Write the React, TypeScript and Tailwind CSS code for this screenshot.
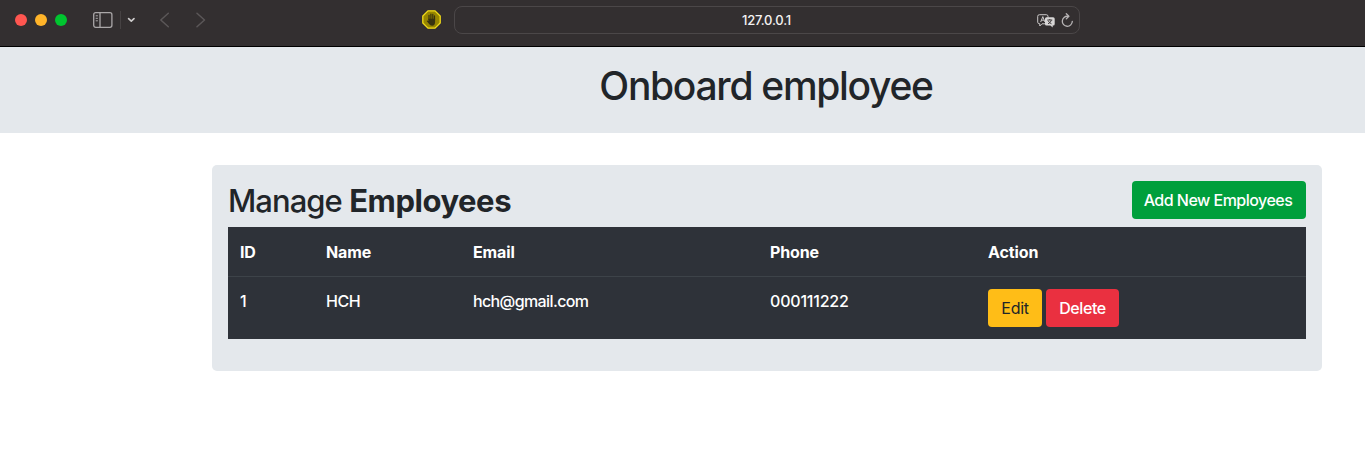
import type { ReactNode } from "react";

type Employee = { id: number; name: string; email: string; phone: string };

const employees: Employee[] = [
  { id: 1, name: "HCH", email: "hch@gmail.com", phone: "000111222" },
];

function Toolbar() {
  return (
    <header className="flex h-[47px] items-start border-b border-black bg-[#332f30]">
      <div className="flex h-10 w-[422px] shrink-0 items-center pl-[15px]">
        <div className="flex gap-2">
          <span className="size-3 rounded-full bg-[#ff5650]" />
          <span className="size-3 rounded-full bg-[#ffb429]" />
          <span className="size-3 rounded-full bg-[#00c52f]" />
        </div>
        <svg className="ml-[26px] h-4 w-5" viewBox="0 0 20 16" fill="none" stroke="#aaa7a8" strokeWidth="1.3">
          <rect x="0.7" y="0.7" width="18.2" height="14.6" rx="2" />
          <path d="M7 1v14" />
          <path d="M2.7 3.8h2.2M2.7 6.3h2.2M2.7 8.8h2.2" strokeWidth="1" />
        </svg>
        <span className="ml-[7px] h-[18px] w-px bg-[#464243]" />
        <svg className="ml-[6px] h-2 w-2" viewBox="0 0 8 8" fill="none" stroke="#cfcdcd" strokeWidth="1.6" strokeLinecap="round" strokeLinejoin="round">
          <path d="M1.6 2.6 4.3 5.2 7 2.6" />
        </svg>
        <svg className="ml-6 h-4 w-[11px]" viewBox="0 0 11 16" fill="none" stroke="#5b5758" strokeWidth="1.5" strokeLinecap="round" strokeLinejoin="round">
          <path d="M9.3 1.3 1.8 8 9.3 14.7" />
        </svg>
        <svg className="ml-[26px] h-4 w-[11px]" viewBox="0 0 11 16" fill="none" stroke="#5b5758" strokeWidth="1.5" strokeLinecap="round" strokeLinejoin="round">
          <path d="M1 1.3 8.5 8 1 14.7" />
        </svg>
      </div>
      <svg className="mt-2.5 size-[19px] shrink-0" viewBox="0 0 19 19">
        <path d="M6 .8h7L18.2 6v7L13 18.2H6L.8 13V6z" fill="#968500" stroke="#f2dc18" strokeWidth="1.3" />
        <path d="M7 9.5V5.3M8.9 9V4M10.8 9V4.3M12.5 10V5.8" fill="none" stroke="#37320f" strokeLinecap="round" strokeWidth="1.2" />
        <path d="M6.4 8.8h6.7v3.3q0 3.6-3 3.6-2 0-3.2-1.9L4.7 10.9q.4-1 1.7.2z" fill="#37320f" />
      </svg>
      <div className="ml-[13px] mt-1.5 flex h-7 w-[626px] shrink-0 items-center rounded-[8px] border border-[#4b4748]">
        <span className="w-[37px] grow pl-[41px] pt-px text-center text-[13px] font-medium leading-none tracking-[-0.2px] text-[#f3f2f2]">127.0.0.1</span>
        <svg className="mt-px h-[14px] w-[18px] shrink-0" viewBox="0 0 18 14">
          <path d="M2.5.7h6.8q1.7 0 1.7 1.6v6q0 1.5-1.7 1.5H5L2.8 12V9.8Q.7 9.800.7 8.200V2.300Q.7.700 2.500.7z" fill="none" stroke="#c9c7c7" strokeWidth="1" />
          <path d="M3.7 8 5.8 2.6 7.9 8M4.4 6.2h2.8" fill="none" stroke="#c9c7c7" strokeWidth="1" />
          <path d="M9.5 3.3h6.600q1.600 0 1.600 1.500v5.300q0 1.500-1.500 1.500h-.5v2L13.400 11.600H9.500Q8 11.600 8 10.100V4.800q0-1.500 1.500-1.500z" fill="#d8d6d6" />
          <path d="M10.3 6h5M12.8 5v1M11 9.8q2.700-1 3.400-3.700M11.200 6.700q1 2.300 3.300 3.100" fill="none" stroke="#332f30" strokeWidth=".9" />
        </svg>
        <svg className="ml-[6px] mr-[6px] h-[15px] w-3 shrink-0" viewBox="0 0 12 15" fill="none" stroke="#b8b5b6" strokeWidth="1.3" strokeLinecap="round" strokeLinejoin="round">
          <path d="M6.8 3.3A5 5 0 1 0 11.3 8.3" />
          <path d="m5.3.8 2.6 2.5-2.6 2.6" />
        </svg>
      </div>
    </header>
  );
}

function Button({ className, children }: { className: string; children: ReactNode }) {
  return (
    <button className={`h-[38px] rounded-[4px] text-center text-[16px] leading-6 ${className}`}>
      {children}
    </button>
  );
}

export default function App() {
  return (
    <div className="min-h-[460px] bg-white font-['Inter',sans-serif] text-[#212529]">
      <Toolbar />
      <div className="h-[86px] bg-[#e4e8ec] pl-[167px] pt-[15px]">
        <h1 className="text-center text-[39px] font-medium leading-[48px] tracking-[-1.3px]">Onboard employee</h1>
      </div>
      <main className="ml-[212px] mr-[43px] mt-8 h-[206px] rounded-[5px] bg-[#e4e8ec] p-4">
        <div className="flex h-[46px] items-start justify-between">
          <h2 className="text-[31px] font-[450] leading-[40px] tracking-[-0.95px]">
            Manage <b className="font-bold tracking-[-0.45px]">Employees</b>
          </h2>
          <Button className="w-[174px] bg-[#009f3c] pr-1.5 pl-1 font-medium tracking-[-0.52px] text-white">Add New Employees</Button>
        </div>
        <table className="w-full table-fixed border-collapse bg-[#2e3239] text-left text-[16px] leading-6 text-white">
          <colgroup>
            <col className="w-[86px]" />
            <col className="w-[147px]" />
            <col className="w-[297px]" />
            <col className="w-[218px]" />
            <col />
          </colgroup>
          <thead>
            <tr className="h-[49px]">
              {["ID", "Name", "Email", "Phone", "Action"].map((title) => (
                <th key={title} className="px-3 pb-0 pt-px font-bold tracking-[-0.12px]">{title}</th>
              ))}
            </tr>
          </thead>
          <tbody>
            {employees.map((employee) => (
              <tr key={employee.id} className="h-[63px] border-t border-[#3d4349] align-top font-[450] tracking-[-0.3px]">
                <td className="px-3 pt-3">{employee.id}</td>
                <td className="px-3 pt-3 tracking-[-0.5px]">{employee.name}</td>
                <td className="px-3 pt-3 tracking-[-0.62px]">{employee.email}</td>
                <td className="px-3 pt-3 tracking-[-0.2px]">{employee.phone}</td>
                <td className="px-3 pt-3">
                  <div className="flex gap-1">
                    <Button className="w-[54px] bg-[#ffbd17] font-normal text-[#212529]">Edit</Button>
                    <Button className="w-[73px] bg-[#ea3040] font-medium tracking-[-0.4px] text-white">Delete</Button>
                  </div>
                </td>
              </tr>
            ))}
          </tbody>
        </table>
      </main>
    </div>
  );
}
